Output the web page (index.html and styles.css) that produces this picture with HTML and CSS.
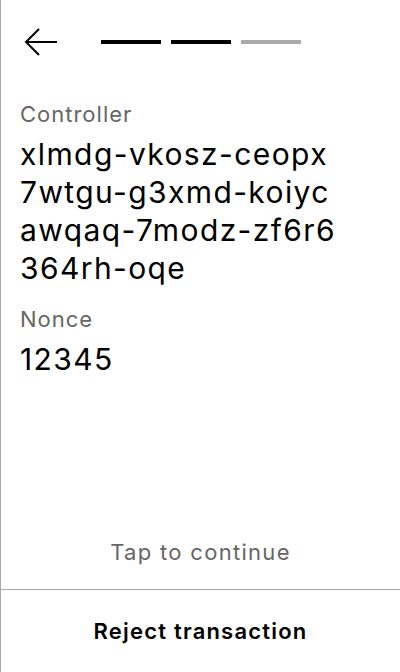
FILE: index.html
```html
<!DOCTYPE html>
<html>
<head>
<meta charset="utf-8">
<link rel="stylesheet" href="styles.css">
</head>
<body>
<div class="screen">
  <header class="header">
    <button class="back" aria-label="Back">
      <svg width="34" height="30" viewBox="0 0 34 30" fill="none" stroke="#000" stroke-width="2">
        <path d="M33 14H2"/>
        <path d="M15 1L2 14l13 13"/>
      </svg>
    </button>
    <div class="steps">
      <span class="step done"></span>
      <span class="step done"></span>
      <span class="step"></span>
    </div>
  </header>
  <main class="content">
    <div class="field">
      <div class="label">Controller</div>
      <div class="value">xlmdg-vkosz-ceopx<br>7wtgu-g3xmd-koiyc<br>awqaq-7modz-zf6r6<br>364rh-oqe</div>
    </div>
    <div class="field">
      <div class="label">Nonce</div>
      <div class="value">12345</div>
    </div>
  </main>
  <div class="tap">Tap to continue</div>
  <button class="reject">Reject transaction</button>
</div>
</body>
</html>
```
FILE: styles.css
```css
* { box-sizing: border-box; }
html, body { margin: 0; padding: 0; background: #fff; }
body {
  font-family: Inter, "Noto Sans", sans-serif;
  color: #000;
}
.screen {
  width: 400px;
  height: 672px;
  border-left: 1px solid #aaa;
  display: flex;
  flex-direction: column;
}
.header {
  height: 86px;
  display: flex;
  align-items: center;
  padding-left: 23px;
}
.back {
  border: 0;
  background: none;
  padding: 0;
  width: 34px;
  height: 30px;
  display: flex;
}
.steps {
  display: flex;
  gap: 10px;
  margin-left: 43px;
  margin-top: -2px;
}
.step {
  width: 60px;
  height: 4px;
  background: #aaa;
}
.step.done { background: #000; }
.content {
  padding: 13px 19px 0;
  display: flex;
  flex-direction: column;
  gap: 17px;
  flex: 1;
}
.label {
  font-size: 22px;
  line-height: 30px;
  letter-spacing: 1px;
  color: #666;
  margin-bottom: 6px;
}
.value {
  font-size: 30px;
  line-height: 38px;
  letter-spacing: 1.4px;
  color: #000;
}
.tap {
  text-align: center;
  font-size: 22px;
  line-height: 30px;
  letter-spacing: 1.3px;
  color: #666;
  padding-bottom: 22px;
}
.reject {
  height: 83px;
  border: 0;
  border-top: 1px solid #aaa;
  background: #fff;
  font-family: inherit;
  font-size: 22px;
  font-weight: 600;
  letter-spacing: 1.2px;
  color: #000;
  padding: 0;
}
```
